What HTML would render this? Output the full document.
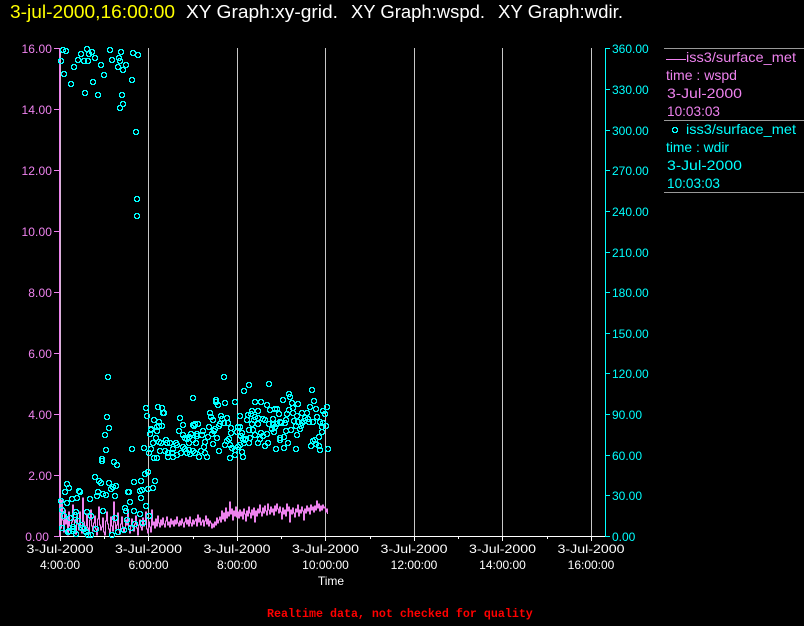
<!DOCTYPE html>
<html><head><meta charset="utf-8"><style>
html,body{margin:0;padding:0;background:#000;width:804px;height:626px;overflow:hidden}
svg{display:block;font-family:"Liberation Sans",sans-serif}
text{white-space:pre}
</style></head><body>
<svg width="804" height="626" viewBox="0 0 804 626" xmlns="http://www.w3.org/2000/svg">
<defs><path id="c" fill="#0ff" fill-rule="evenodd" shape-rendering="crispEdges" d="M-2-3h4v1h1v1h0v3h-1v1h-4v-1h-1v-4h1zM-1-2v1h-1v2h1v1h2v-1h1v-2h-1v-1z"/></defs>
<rect width="804" height="626" fill="#000"/>
<!-- title -->
<g font-size="18" fill="#fff">
<text x="10" y="18" fill="#ff0" textLength="165" lengthAdjust="spacingAndGlyphs">3-jul-2000,16:00:00</text>
<text x="186" y="18" textLength="152" lengthAdjust="spacingAndGlyphs">XY Graph:xy-grid.</text>
<text x="351" y="18" textLength="134" lengthAdjust="spacingAndGlyphs">XY Graph:wspd.</text>
<text x="498" y="18" textLength="125" lengthAdjust="spacingAndGlyphs">XY Graph:wdir.</text>
</g>
<!-- grid -->
<g stroke="#c8c8c8" stroke-width="1" shape-rendering="crispEdges">
<path d="M148.5 48V536M237.5 48V536M325.5 48V536M414.5 48V536M502.5 48V536M591.5 48V536"/>
</g>
<!-- bottom axis -->
<g stroke="#fff" stroke-width="1" shape-rendering="crispEdges" fill="none">
<path d="M60 536.5H605M60.5 536V541M148.5 536V541M237.5 536V541M325.5 536V541M414.5 536V541M502.5 536V541M591.5 536V541M104.5 536V539M193.5 536V539M281.5 536V539M370.5 536V539M458.5 536V539M547.5 536V539"/>
</g>
<!-- pink trace -->
<path fill="none" stroke="#ee82ee" stroke-width="1" shape-rendering="crispEdges" d="M60.5 490V528h1V500h1V520h1V532h1V510h1V524h1V518h1V535h1V512h1V526h1V530h1V522h1V505h1V520h1V528h1V534h1V516h1V524h1V530h1V512h1V527h1V533h1V498h1V522h1V530h1V526h1V514h1V528h1V534h1V520h1V510h1V526h1V531h1V523h1V516h1V529h1V535h1V519h1V507h1V525h1V530h1V527h1V518h1V532h1V535h1V521h1V512h1V524h1V529h1V533h1V517h1V526h1V531h1V502h1V522h1V529h1V525h1V513h1V530h1V534h1V524h1V517h1V527h1V532h1V528h1V520h1V525h1V510h1V529h1V533h1V526h1V519h1V527h1V531h1V524h1V516h1V528h1V535h1V525h1V520h1V527h1V530h1V518h1V526h1V524h1V512h1V529h1V533h1V522h1V527h1V532h1V510h1V525h1V522h1V528h1V519h1V526h1V516h1V523h1V527h1V520h1V525h1V518h1V524h1V527h1V521h1V517h1V525h1V522h1V527h1V519h1V524h1V521h1V526h1V520h1V524h1V517h1V523h1V526h1V521h1V525h1V519h1V523h1V527h1V522h1V518h1V524h1V520h1V526h1V517h1V523h1V526h1V520h1V524h1V521h1V519h1V526h1V515h1V522h1V518h1V525h1V522h1V520h1V526h1V521h1V516h1V524h1V519h1V526h1V521h1V523h1V528h1V524h1V527h1V522h1V525h1V518h1V523h1V520h1V517h1V522h1V511h1V519h1V513h1V521h1V508h1V518h1V512h1V516h1V502h1V514h1V509h1V520h1V511h1V516h1V507h1V517h1V512h1V518h1V510h1V516h1V512h1V519h1V509h1V514h1V521h1V511h1V516h1V507h1V513h1V518h1V510h1V515h1V508h1V522h1V511h1V516h1V509h1V513h1V505h1V512h1V516h1V508h1V513h1V506h1V511h1V515h1V504h1V510h1V514h1V507h1V512h1V509h1V515h1V506h1V511h1V504h1V509h1V513h1V507h1V512h1V519h1V508h1V514h1V510h1V516h1V504h1V511h1V507h1V522h1V510h1V514h1V508h1V513h1V517h1V509h1V512h1V505h1V516h1V510h1V513h1V507h1V511h1V520h1V509h1V513h1V506h1V511h1V508h1V514h1V505h1V510h1V507h1V512h1V506h1V510h1V501h1V508h1V504h1V511h1V506h1V510h1V505h1V508h1V507h1V512h1V509h1V514"/>
<!-- left axis -->
<g shape-rendering="crispEdges" fill="none">
<path d="M59.5 48V536" stroke="#ee82ee"/>
<path d="M60.5 48V536" stroke="#d8b0d8"/>
<path stroke="#ee82ee" d="M54 48.5H60M54 109.5H60M54 170.5H60M54 231.5H60M54 292.5H60M54 353.5H60M54 414.5H60M54 475.5H60M54 536.5H60"/>
</g>
<g font-size="12" fill="#ee82ee" text-anchor="end" letter-spacing=".1">
<text x="52" y="53">16.00</text><text x="52" y="114">14.00</text><text x="52" y="175">12.00</text><text x="52" y="236">10.00</text><text x="52" y="297">8.00</text><text x="52" y="358">6.00</text><text x="52" y="419">4.00</text><text x="52" y="480">2.00</text><text x="49" y="541">0.00</text>
</g>
<!-- right axis -->
<g stroke="#0ff" shape-rendering="crispEdges" fill="none">
<path d="M605.5 48V536M605 48.5H610M605 89.5H610M605 130.5H610M605 170.5H610M605 211.5H610M605 252.5H610M605 292.5H610M605 333.5H610M605 373.5H610M605 414.5H610M605 455.5H610M605 495.5H610M605 536.5H610"/>
</g>
<g font-size="12" fill="#0ff">
<text x="612" y="53">360.00</text><text x="612" y="94">330.00</text><text x="612" y="135">300.00</text><text x="612" y="175">270.00</text><text x="612" y="216">240.00</text><text x="612" y="257">210.00</text><text x="612" y="297">180.00</text><text x="612" y="338">150.00</text><text x="612" y="378">120.00</text><text x="612" y="419">90.00</text><text x="612" y="460">60.00</text><text x="612" y="500">30.00</text><text x="612" y="541">0.00</text>
</g>
<!-- x labels -->
<g font-size="12" fill="#fff" text-anchor="middle">
<text x="60" y="553" textLength="67" lengthAdjust="spacingAndGlyphs">3-Jul-2000</text><text x="60" y="569">4:00:00</text>
<text x="148.5" y="553" textLength="67" lengthAdjust="spacingAndGlyphs">3-Jul-2000</text><text x="148.5" y="569">6:00:00</text>
<text x="237" y="553" textLength="67" lengthAdjust="spacingAndGlyphs">3-Jul-2000</text><text x="237" y="569">8:00:00</text>
<text x="325.5" y="553" textLength="67" lengthAdjust="spacingAndGlyphs">3-Jul-2000</text><text x="325.5" y="569">10:00:00</text>
<text x="414" y="553" textLength="67" lengthAdjust="spacingAndGlyphs">3-Jul-2000</text><text x="414" y="569">12:00:00</text>
<text x="502.5" y="553" textLength="67" lengthAdjust="spacingAndGlyphs">3-Jul-2000</text><text x="502.5" y="569">14:00:00</text>
<text x="591" y="553" textLength="67" lengthAdjust="spacingAndGlyphs">3-Jul-2000</text><text x="591" y="569">16:00:00</text>
<text x="331" y="585">Time</text>
</g>
<text x="267" y="617" font-family="'Liberation Mono',monospace" font-weight="bold" font-size="11.67" fill="#f00">Realtime data, not checked for quality</text>
<!-- legend -->
<g stroke="#999" shape-rendering="crispEdges"><path d="M664 48.5H804M664 120.5H804M664 192.5H804"/></g>
<path d="M666 59.5H686" stroke="#ee82ee" shape-rendering="crispEdges"/>
<g font-size="14" fill="#ee82ee">
<text x="686" y="62" textLength="110" lengthAdjust="spacingAndGlyphs">iss3/surface_met</text>
<text x="666" y="80" textLength="71" lengthAdjust="spacingAndGlyphs">time : wspd</text>
<text x="667" y="98" textLength="75" lengthAdjust="spacingAndGlyphs">3-Jul-2000</text>
<text x="667" y="116" textLength="53" lengthAdjust="spacingAndGlyphs">10:03:03</text>
</g>
<g font-size="14" fill="#0ff">
<text x="686" y="134" textLength="110" lengthAdjust="spacingAndGlyphs">iss3/surface_met</text>
<text x="666" y="152" textLength="63" lengthAdjust="spacingAndGlyphs">time : wdir</text>
<text x="667" y="170" textLength="75" lengthAdjust="spacingAndGlyphs">3-Jul-2000</text>
<text x="667" y="188" textLength="53" lengthAdjust="spacingAndGlyphs">10:03:03</text>
</g>
<!-- scatter -->
<g>
<use href="#c" x="675" y="130"/>
<use href="#c" x="63" y="50"/><use href="#c" x="66" y="51"/><use href="#c" x="87" y="49"/><use href="#c" x="92" y="52"/><use href="#c" x="110" y="50"/><use href="#c" x="121" y="52"/><use href="#c" x="133" y="53"/><use href="#c" x="138" y="55"/><use href="#c" x="81" y="54"/><use href="#c" x="89" y="54"/><use href="#c" x="95" y="58"/><use href="#c" x="119" y="58"/><use href="#c" x="120" y="61"/><use href="#c" x="112" y="60"/><use href="#c" x="78" y="60"/><use href="#c" x="84" y="61"/><use href="#c" x="88" y="61"/><use href="#c" x="61" y="61"/><use href="#c" x="101" y="65"/><use href="#c" x="126" y="65"/><use href="#c" x="118" y="67"/><use href="#c" x="123" y="70"/><use href="#c" x="74" y="67"/><use href="#c" x="64" y="74"/><use href="#c" x="104" y="75"/><use href="#c" x="132" y="80"/><use href="#c" x="93" y="82"/><use href="#c" x="71" y="84"/><use href="#c" x="85" y="93"/><use href="#c" x="98" y="95"/><use href="#c" x="122" y="95"/><use href="#c" x="123" y="104"/><use href="#c" x="120" y="108"/><use href="#c" x="136" y="132"/><use href="#c" x="137" y="199"/><use href="#c" x="137" y="216"/>
<use href="#c" x="108" y="377"/><use href="#c" x="107" y="417"/><use href="#c" x="109" y="428"/><use href="#c" x="105" y="435"/><use href="#c" x="106" y="450"/><use href="#c" x="132" y="449"/><use href="#c" x="102" y="459"/><use href="#c" x="146" y="408"/><use href="#c" x="147" y="416"/><use href="#c" x="158" y="407"/><use href="#c" x="154" y="420"/><use href="#c" x="157" y="427"/><use href="#c" x="151" y="430"/><use href="#c" x="157" y="431"/><use href="#c" x="150" y="434"/><use href="#c" x="156" y="438"/><use href="#c" x="153" y="443"/><use href="#c" x="144" y="448"/><use href="#c" x="151" y="449"/><use href="#c" x="149" y="453"/><use href="#c" x="154" y="458"/>
<use href="#c" x="102" y="461"/><use href="#c" x="114" y="462"/><use href="#c" x="117" y="465"/><use href="#c" x="95" y="477"/><use href="#c" x="99" y="481"/><use href="#c" x="101" y="483"/><use href="#c" x="67" y="484"/><use href="#c" x="69" y="488"/><use href="#c" x="65" y="492"/><use href="#c" x="79" y="491"/><use href="#c" x="80" y="492"/><use href="#c" x="109" y="483"/><use href="#c" x="111" y="489"/><use href="#c" x="113" y="487"/><use href="#c" x="116" y="486"/><use href="#c" x="134" y="482"/><use href="#c" x="141" y="481"/><use href="#c" x="155" y="481"/><use href="#c" x="145" y="474"/><use href="#c" x="148" y="472"/><use href="#c" x="129" y="492"/><use href="#c" x="128" y="492"/><use href="#c" x="140" y="491"/><use href="#c" x="142" y="490"/><use href="#c" x="148" y="489"/><use href="#c" x="153" y="488"/><use href="#c" x="98" y="492"/><use href="#c" x="97" y="496"/><use href="#c" x="103" y="494"/><use href="#c" x="106" y="495"/><use href="#c" x="115" y="496"/><use href="#c" x="141" y="498"/><use href="#c" x="77" y="498"/><use href="#c" x="72" y="499"/><use href="#c" x="90" y="499"/><use href="#c" x="61" y="501"/><use href="#c" x="67" y="503"/><use href="#c" x="130" y="502"/><use href="#c" x="146" y="506"/><use href="#c" x="125" y="508"/><use href="#c" x="126" y="511"/><use href="#c" x="103" y="511"/><use href="#c" x="87" y="512"/><use href="#c" x="134" y="511"/><use href="#c" x="62" y="510"/><use href="#c" x="76" y="512"/><use href="#c" x="75" y="515"/><use href="#c" x="64" y="516"/><use href="#c" x="91" y="516"/><use href="#c" x="70" y="518"/><use href="#c" x="140" y="514"/><use href="#c" x="149" y="516"/><use href="#c" x="115" y="518"/><use href="#c" x="127" y="520"/><use href="#c" x="78" y="521"/><use href="#c" x="143" y="523"/><use href="#c" x="135" y="524"/><use href="#c" x="81" y="525"/><use href="#c" x="84" y="529"/><use href="#c" x="62" y="528"/><use href="#c" x="82" y="528"/><use href="#c" x="73" y="527"/><use href="#c" x="73" y="529"/><use href="#c" x="69" y="531"/><use href="#c" x="96" y="529"/><use href="#c" x="131" y="528"/><use href="#c" x="124" y="530"/><use href="#c" x="118" y="532"/><use href="#c" x="86" y="532"/><use href="#c" x="73" y="531"/><use href="#c" x="91" y="535"/><use href="#c" x="112" y="535"/><use href="#c" x="88" y="535"/><use href="#c" x="68" y="532"/><use href="#c" x="76" y="534"/>
<use href="#c" x="224" y="377"/><use href="#c" x="244" y="391"/><use href="#c" x="249" y="385"/><use href="#c" x="193" y="398"/><use href="#c" x="216" y="400"/><use href="#c" x="216" y="402"/><use href="#c" x="218" y="405"/><use href="#c" x="225" y="403"/><use href="#c" x="235" y="402"/><use href="#c" x="162" y="408"/><use href="#c" x="163" y="413"/><use href="#c" x="164" y="413"/><use href="#c" x="210" y="413"/><use href="#c" x="211" y="417"/><use href="#c" x="213" y="420"/><use href="#c" x="180" y="418"/><use href="#c" x="159" y="422"/><use href="#c" x="221" y="416"/><use href="#c" x="222" y="419"/><use href="#c" x="227" y="418"/><use href="#c" x="228" y="423"/><use href="#c" x="240" y="416"/><use href="#c" x="248" y="415"/><use href="#c" x="247" y="420"/><use href="#c" x="183" y="425"/><use href="#c" x="198" y="424"/><use href="#c" x="193" y="425"/><use href="#c" x="194" y="426"/><use href="#c" x="195" y="424"/><use href="#c" x="209" y="427"/><use href="#c" x="219" y="426"/><use href="#c" x="220" y="424"/><use href="#c" x="224" y="423"/><use href="#c" x="162" y="426"/><use href="#c" x="159" y="426"/><use href="#c" x="151" y="429"/><use href="#c" x="179" y="431"/><use href="#c" x="203" y="431"/><use href="#c" x="214" y="431"/><use href="#c" x="215" y="429"/><use href="#c" x="212" y="434"/><use href="#c" x="191" y="434"/><use href="#c" x="197" y="434"/><use href="#c" x="202" y="435"/><use href="#c" x="208" y="437"/><use href="#c" x="217" y="438"/><use href="#c" x="231" y="428"/><use href="#c" x="238" y="427"/><use href="#c" x="231" y="433"/><use href="#c" x="237" y="432"/><use href="#c" x="242" y="433"/><use href="#c" x="183" y="435"/><use href="#c" x="185" y="438"/><use href="#c" x="187" y="439"/><use href="#c" x="189" y="437"/><use href="#c" x="193" y="440"/><use href="#c" x="197" y="436"/><use href="#c" x="159" y="442"/><use href="#c" x="161" y="443"/><use href="#c" x="166" y="440"/><use href="#c" x="167" y="443"/><use href="#c" x="170" y="443"/><use href="#c" x="176" y="443"/><use href="#c" x="177" y="445"/><use href="#c" x="189" y="443"/><use href="#c" x="196" y="443"/><use href="#c" x="205" y="442"/><use href="#c" x="213" y="444"/><use href="#c" x="229" y="439"/><use href="#c" x="227" y="441"/><use href="#c" x="225" y="445"/><use href="#c" x="230" y="445"/><use href="#c" x="232" y="448"/><use href="#c" x="235" y="450"/><use href="#c" x="238" y="447"/><use href="#c" x="243" y="439"/><use href="#c" x="246" y="439"/><use href="#c" x="244" y="443"/><use href="#c" x="249" y="443"/><use href="#c" x="219" y="451"/><use href="#c" x="204" y="447"/><use href="#c" x="201" y="451"/><use href="#c" x="205" y="453"/><use href="#c" x="193" y="451"/><use href="#c" x="189" y="450"/><use href="#c" x="195" y="453"/><use href="#c" x="160" y="451"/><use href="#c" x="165" y="451"/><use href="#c" x="168" y="453"/><use href="#c" x="173" y="449"/><use href="#c" x="172" y="453"/><use href="#c" x="177" y="455"/><use href="#c" x="181" y="453"/><use href="#c" x="187" y="453"/><use href="#c" x="185" y="449"/><use href="#c" x="183" y="447"/><use href="#c" x="168" y="457"/><use href="#c" x="173" y="457"/><use href="#c" x="199" y="457"/><use href="#c" x="207" y="457"/><use href="#c" x="157" y="458"/><use href="#c" x="190" y="454"/><use href="#c" x="235" y="455"/><use href="#c" x="243" y="457"/><use href="#c" x="230" y="458"/><use href="#c" x="242" y="452"/>
<use href="#c" x="269" y="384"/><use href="#c" x="312" y="390"/><use href="#c" x="289" y="394"/><use href="#c" x="290" y="397"/><use href="#c" x="283" y="400"/><use href="#c" x="255" y="402"/><use href="#c" x="261" y="402"/><use href="#c" x="267" y="405"/><use href="#c" x="292" y="403"/><use href="#c" x="293" y="408"/><use href="#c" x="298" y="404"/><use href="#c" x="314" y="401"/><use href="#c" x="327" y="407"/><use href="#c" x="310" y="407"/><use href="#c" x="316" y="409"/><use href="#c" x="323" y="411"/><use href="#c" x="325" y="414"/><use href="#c" x="289" y="410"/><use href="#c" x="287" y="414"/><use href="#c" x="275" y="409"/><use href="#c" x="270" y="410"/><use href="#c" x="277" y="409"/><use href="#c" x="279" y="414"/><use href="#c" x="252" y="411"/><use href="#c" x="258" y="411"/><use href="#c" x="251" y="414"/><use href="#c" x="255" y="417"/><use href="#c" x="258" y="418"/><use href="#c" x="254" y="420"/><use href="#c" x="263" y="419"/><use href="#c" x="265" y="420"/><use href="#c" x="273" y="419"/><use href="#c" x="293" y="413"/><use href="#c" x="297" y="416"/><use href="#c" x="302" y="413"/><use href="#c" x="307" y="413"/><use href="#c" x="317" y="417"/><use href="#c" x="294" y="421"/><use href="#c" x="298" y="422"/><use href="#c" x="305" y="418"/><use href="#c" x="308" y="419"/><use href="#c" x="304" y="421"/><use href="#c" x="302" y="423"/><use href="#c" x="309" y="422"/><use href="#c" x="313" y="422"/><use href="#c" x="320" y="422"/><use href="#c" x="323" y="423"/><use href="#c" x="326" y="426"/><use href="#c" x="322" y="427"/><use href="#c" x="300" y="429"/><use href="#c" x="296" y="426"/><use href="#c" x="301" y="426"/><use href="#c" x="286" y="420"/><use href="#c" x="285" y="423"/><use href="#c" x="281" y="423"/><use href="#c" x="280" y="422"/><use href="#c" x="277" y="424"/><use href="#c" x="269" y="424"/><use href="#c" x="273" y="425"/><use href="#c" x="258" y="424"/><use href="#c" x="252" y="424"/><use href="#c" x="240" y="427"/><use href="#c" x="275" y="427"/><use href="#c" x="272" y="429"/><use href="#c" x="274" y="432"/><use href="#c" x="286" y="431"/><use href="#c" x="291" y="430"/><use href="#c" x="297" y="435"/><use href="#c" x="249" y="430"/><use href="#c" x="253" y="430"/><use href="#c" x="241" y="436"/><use href="#c" x="255" y="435"/><use href="#c" x="261" y="433"/><use href="#c" x="267" y="434"/><use href="#c" x="263" y="436"/><use href="#c" x="260" y="439"/><use href="#c" x="250" y="438"/><use href="#c" x="245" y="440"/><use href="#c" x="280" y="438"/><use href="#c" x="284" y="437"/><use href="#c" x="280" y="440"/><use href="#c" x="258" y="443"/><use href="#c" x="268" y="443"/><use href="#c" x="265" y="446"/><use href="#c" x="288" y="443"/><use href="#c" x="284" y="448"/><use href="#c" x="276" y="449"/><use href="#c" x="296" y="449"/><use href="#c" x="311" y="446"/><use href="#c" x="315" y="440"/><use href="#c" x="313" y="441"/><use href="#c" x="319" y="437"/><use href="#c" x="322" y="432"/><use href="#c" x="316" y="444"/><use href="#c" x="319" y="446"/><use href="#c" x="320" y="450"/><use href="#c" x="328" y="449"/><use href="#c" x="240" y="445"/>
</g>
</svg>
</body></html>
